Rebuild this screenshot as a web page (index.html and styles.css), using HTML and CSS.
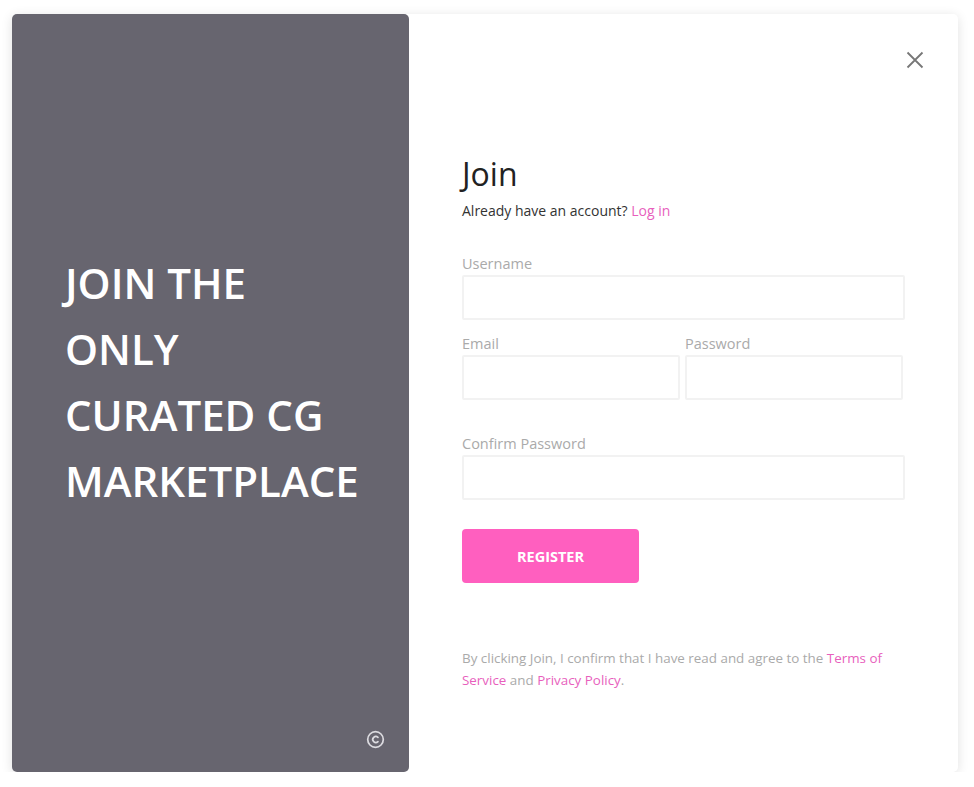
FILE: index.html
```html
<!DOCTYPE html>
<html lang="en">
  <head>
    <meta charset="UTF-8" />
    <meta name="viewport" content="width=device-width, initial-scale=1.0" />
    <title>Join</title>
    <link rel="stylesheet" href="styles.css">
  </head>
  <body>
    <div class="modal">
      <div class="promo">
        <h1 class="promo-title">JOIN THE<br />ONLY<br />CURATED CG<br />MARKETPLACE</h1>
        <div class="promo-foot">
          <svg class="copy-icon" width="19" height="19" viewBox="0 0 20 20">
            <circle cx="10" cy="10" r="8.2" fill="none" stroke="#dcdbe0" stroke-width="1.8" />
            <path d="M12.6 7.7a3.2 3.2 0 1 0 0 4.6" fill="none" stroke="#dcdbe0" stroke-width="1.8" stroke-linecap="round" />
          </svg>
        </div>
      </div>

      <div class="panel">
        <div class="panel-top">
          <button type="button" class="close" aria-label="Close">
            <svg width="18" height="18" viewBox="0 0 18 18">
              <path d="M1.5 1.5l15 15M16.5 1.5l-15 15" stroke="#777" stroke-width="1.8" />
            </svg>
          </button>
        </div>

        <h2 class="title">Join</h2>
        <p class="subtitle">Already have an account? <a href="#">Log in</a></p>

        <form id="register">
          <label>Username</label>
          <input type="text" id="username" />

          <div class="pair">
            <div class="field">
              <label>Email</label>
              <input type="email" id="email" />
            </div>
            <div class="field">
              <label>Password</label>
              <input type="password" id="password" />
            </div>
          </div>

          <label class="spaced">Confirm Password</label>
          <input type="password" id="confirm" />

          <button type="button" class="register">REGISTER</button>
        </form>

        <p class="terms">
          By clicking Join, I confirm that I have read and agree to the
          <a href="#">Terms of Service</a> and <a href="#">Privacy Policy</a>.
        </p>
      </div>
    </div>
  </body>
</html>
```

FILE: styles.css
```css
body {
  font-family: "Open Sans", Arial, sans-serif;
  margin: 0;
  padding: 0;
  background: #fff;
}
.modal {
  display: flex;
  width: 946px;
  height: 758px;
  margin: 14px 0 0 12px;
  border-radius: 5px;
  background: #fff;
  box-shadow: 0 2px 12px rgba(0, 0, 0, 0.12);
}
.promo {
  width: 397px;
  background: #67656f;
  border-radius: 5px;
  display: flex;
  flex-direction: column;
  justify-content: center;
  padding: 0 30px 22px 53px;
  box-sizing: border-box;
  position: relative;
}
.promo-title {
  color: #fff;
  font-size: 42px;
  font-weight: 600;
  line-height: 66px;
  margin: 0;
}
.promo-foot {
  position: absolute;
  right: 24px;
  bottom: 23px;
}
.copy-icon {
  display: block;
}
.panel {
  flex: 1;
  padding: 0 53px;
}
.panel-top {
  display: flex;
  justify-content: flex-end;
  padding-top: 37px;
  margin-right: -19px;
}
.close {
  background: none;
  border: none;
  padding: 0;
  cursor: pointer;
  width: 18px;
  height: 18px;
}
.title {
  font-size: 32px;
  font-weight: 500;
  color: #222;
  margin: 86px 0 0;
  line-height: 38px;
}
.subtitle {
  font-size: 14px;
  color: #333;
  margin: 8px 0 0;
}
a {
  color: #e85fbd;
  text-decoration: none;
}
#register {
  display: flex;
  flex-direction: column;
  margin-top: 34px;
}
#register label {
  font-size: 14.5px;
  color: #aaa;
  line-height: 20px;
  margin-bottom: 1px;
}
#register input {
  height: 45px;
  border: 2px solid #f2f2f2;
  border-radius: 2px;
  box-sizing: border-box;
  width: 100%;
  font-size: 14px;
  padding: 8px;
  outline: none;
}
.pair {
  display: flex;
  gap: 5px;
  margin-top: 14px;
  margin-right: 2px;
}
.field {
  flex: 1;
  display: flex;
  flex-direction: column;
}
#register .spaced {
  margin-top: 34px;
}
.register {
  align-self: flex-start;
  width: 177px;
  height: 54px;
  margin-top: 29px;
  background: #ff5fbf;
  color: #fff;
  font-family: inherit;
  font-size: 14.5px;
  font-weight: 700;
  border: none;
  border-radius: 4px;
  cursor: pointer;
}
.terms {
  font-size: 13.4px;
  line-height: 22px;
  color: #aaa;
  margin: 64px 0 0;
}
```
